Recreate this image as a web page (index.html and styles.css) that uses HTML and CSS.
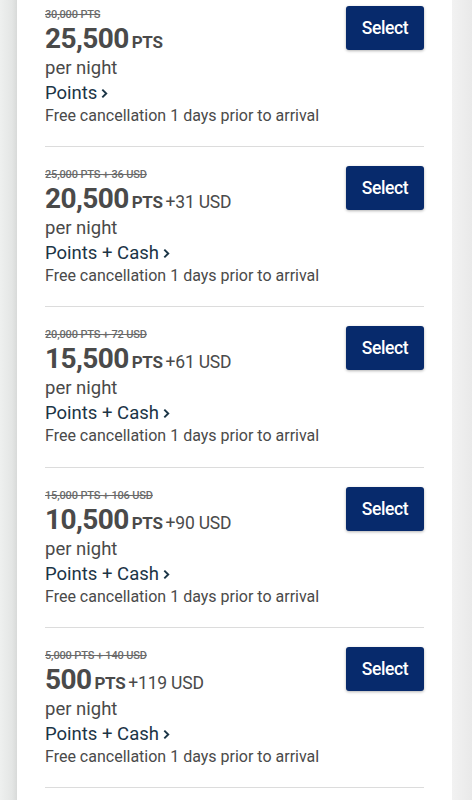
FILE: index.html
```html
<!DOCTYPE html>
<html>
<head>
<meta charset="utf-8">
<link rel="stylesheet" href="styles.css">
</head>
<body>
<div class="page">
  <div class="card">
    <div class="rate">
      <div class="info">
        <div class="was">30,000 PTS</div>
        <div class="price"><span class="big">25,500</span><span class="pts">PTS</span></div>
        <div class="per">per night</div>
        <div class="type">Points<svg class="chev" viewBox="0 0 8 12" width="7" height="11"><path d="M1.5 1.5 L6 6 L1.5 10.5" fill="none" stroke="currentColor" stroke-width="2.2"/></svg></div>
        <div class="cancel">Free cancellation 1 days prior to arrival</div>
      </div>
      <button class="select">Select</button>
    </div>
    <div class="rate">
      <div class="info">
        <div class="was">25,000 PTS + 36 USD</div>
        <div class="price"><span class="big">20,500</span><span class="pts">PTS</span><span class="usd">+31 USD</span></div>
        <div class="per">per night</div>
        <div class="type">Points + Cash<svg class="chev" viewBox="0 0 8 12" width="7" height="11"><path d="M1.5 1.5 L6 6 L1.5 10.5" fill="none" stroke="currentColor" stroke-width="2.2"/></svg></div>
        <div class="cancel">Free cancellation 1 days prior to arrival</div>
      </div>
      <button class="select">Select</button>
    </div>
    <div class="rate">
      <div class="info">
        <div class="was">20,000 PTS + 72 USD</div>
        <div class="price"><span class="big">15,500</span><span class="pts">PTS</span><span class="usd">+61 USD</span></div>
        <div class="per">per night</div>
        <div class="type">Points + Cash<svg class="chev" viewBox="0 0 8 12" width="7" height="11"><path d="M1.5 1.5 L6 6 L1.5 10.5" fill="none" stroke="currentColor" stroke-width="2.2"/></svg></div>
        <div class="cancel">Free cancellation 1 days prior to arrival</div>
      </div>
      <button class="select">Select</button>
    </div>
    <div class="rate">
      <div class="info">
        <div class="was">15,000 PTS + 106 USD</div>
        <div class="price"><span class="big">10,500</span><span class="pts">PTS</span><span class="usd">+90 USD</span></div>
        <div class="per">per night</div>
        <div class="type">Points + Cash<svg class="chev" viewBox="0 0 8 12" width="7" height="11"><path d="M1.5 1.5 L6 6 L1.5 10.5" fill="none" stroke="currentColor" stroke-width="2.2"/></svg></div>
        <div class="cancel">Free cancellation 1 days prior to arrival</div>
      </div>
      <button class="select">Select</button>
    </div>
    <div class="rate">
      <div class="info">
        <div class="was">5,000 PTS + 140 USD</div>
        <div class="price"><span class="big">500</span><span class="pts">PTS</span><span class="usd">+119 USD</span></div>
        <div class="per">per night</div>
        <div class="type">Points + Cash<svg class="chev" viewBox="0 0 8 12" width="7" height="11"><path d="M1.5 1.5 L6 6 L1.5 10.5" fill="none" stroke="currentColor" stroke-width="2.2"/></svg></div>
        <div class="cancel">Free cancellation 1 days prior to arrival</div>
      </div>
      <button class="select">Select</button>
    </div>
  </div>
</div>
</body>
</html>
```
FILE: styles.css
```css
html, body {
  margin: 0;
  padding: 0;
  background: #ebecec;
  font-family: Roboto, "Liberation Sans", sans-serif;
  overflow: hidden;
  height: 800px;
}
.page {
  display: flow-root;
  padding: 0 20px 0 17px;
  height: 800px;
  background: linear-gradient(to right, #eef0ef 0, #e4e6e5 12px, #d8dad9 17px, transparent 17px), linear-gradient(to left, #e9e9e9 0, #f2f2f2 20px, transparent 20px);
}
.card {
  background: #fff;
  margin-top: -13px;
  padding: 0 28px 40px;
}
.rate {
  display: flex;
  justify-content: space-between;
  align-items: flex-start;
  padding-top: 19px;
  height: 140.2px;
  border-bottom: 1px solid #dcdcdc;
}
.info {
  display: flex;
  flex-direction: column;
  padding-top: 2px;
}
.was {
  font-size: 11px;
  line-height: 14px;
  color: #6a6a6a;
  font-weight: 500;
  text-decoration: line-through;
  letter-spacing: -0.15px;
}
.price {
  display: flex;
  align-items: baseline;
  height: 34px;
  color: #4a4a4a;
}
.big {
  font-size: 28px;
  font-weight: 700;
  line-height: 34px;
  letter-spacing: -0.6px;
}
.pts {
  font-size: 17px;
  font-weight: 700;
  margin-left: 3px;
  letter-spacing: -0.3px;
}
.usd {
  font-size: 17.5px;
  margin-left: 3px;
  color: #4a4a4a;
  letter-spacing: -0.2px;
}
.per {
  font-size: 18.5px;
  line-height: 25px;
  color: #4a4a4a;
}
.type {
  font-size: 18.5px;
  line-height: 24px;
  color: #1b3546;
  display: flex;
  align-items: center;
}
.chev {
  margin-left: 4px;
  margin-top: 1px;
}
.cancel {
  font-size: 16px;
  line-height: 22px;
  color: #4a4a4a;
}
.select {
  width: 78px;
  height: 44px;
  background: #072a6c;
  color: #fff;
  border: none;
  border-radius: 3px;
  font-family: Roboto, "Liberation Sans", sans-serif;
  font-size: 17.5px;
  font-weight: 500;
  letter-spacing: -0.4px;
  box-shadow: 0 1px 3px rgba(0,0,0,0.3);
  padding: 0;
}
```
